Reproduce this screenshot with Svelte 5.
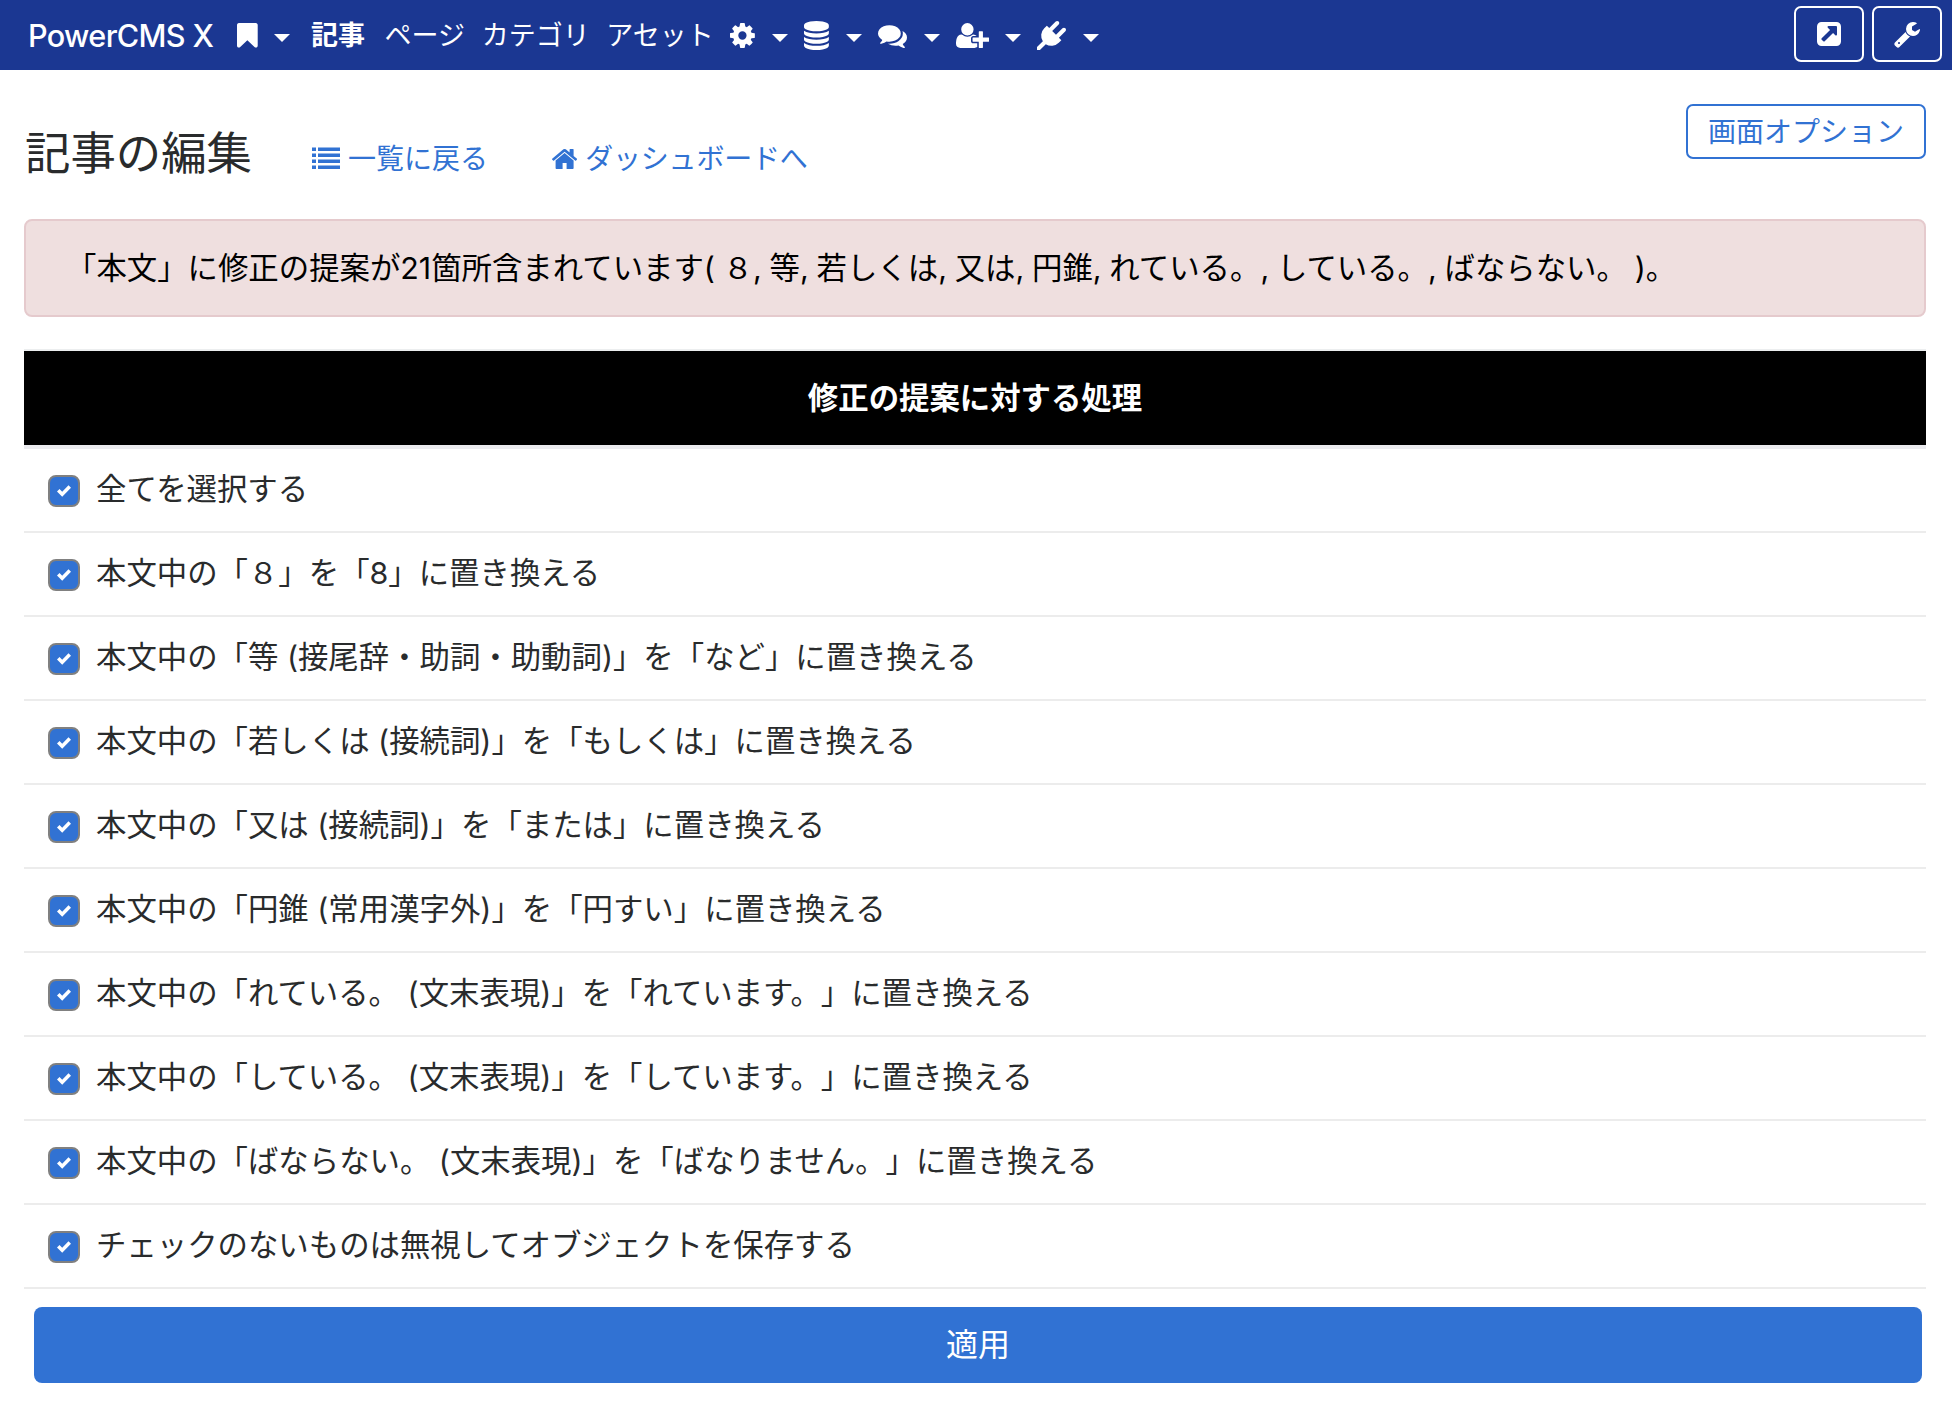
<script>
  const icons = {
    bookmark: { box: '256 0 1280 1792', d: 'M1420 128q23 0 44 9 33 13 52.5 41t19.5 62v1289q0 34-19.5 62t-52.5 41q-19 8-44 8-48 0-83-32l-441-424-441 424q-36 33-83 33-23 0-44-9-33-13-52.5-41t-19.5-62v-1289q0-34 19.5-62t52.5-41q21-9 44-9h1048z' },
    cog: { box: '128 0 1536 1792', d: 'M1152 896q0-106-75-181t-181-75-181 75-75 181 75 181 181 75 181-75 75-181zm512-109v222q0 12-8 23t-20 13l-185 28q-19 54-39 91 35 50 107 138 10 12 10 25t-9 23q-27 37-99 108t-94 71q-12 0-26-9l-138-108q-44 23-91 38-16 136-29 186-7 28-36 28h-222q-14 0-24.500-8.500t-11.500-21.500l-28-184q-49-16-90-37l-141 107q-10 9-25 9-14 0-25-11-126-114-165-168-7-10-7-23 0-12 8-23 15-21 51-66.500t54-70.500q-27-50-41-99l-183-27q-13-2-21-12.500t-8-23.500v-222q0-12 8-23t19-13l186-28q14-46 39-92-40-57-107-138-10-12-10-24 0-10 9-23 26-36 98.500-107.500t94.500-71.500q13 0 26 10l138 107q44-23 91-38 16-136 29-186 7-28 36-28h222q14 0 24.500 8.500t11.500 21.500l28 184q49 16 90 37l142-107q9-9 24-9 13 0 25 10 129 119 165 170 7 8 7 22 0 12-8 23-15 21-51 66.500t-54 70.500q26 50 41 98l183 28q13 2 21 12.500t8 23.500z' },
    database: { box: '128 0 1536 1792', d: 'M896 768q237 0 443-43t325-127v170q0 69-103 128t-280 93.500-385 34.500-385-34.500-280-93.500-103-128v-170q119 84 325 127t443 43zm0 768q237 0 443-43t325-127v170q0 69-103 128t-280 93.500-385 34.500-385-34.500-280-93.500-103-128v-170q119 84 325 127t443 43zm0-384q237 0 443-43t325-127v170q0 69-103 128t-280 93.500-385 34.500-385-34.500-280-93.500-103-128v-170q119 84 325 127t443 43zm0-1152q208 0 385 34.500t280 93.500 103 128v128q0 69-103 128t-280 93.500-385 34.500-385-34.500-280-93.500-103-128v-128q0-69 103-128t280-93.500 385-34.500z' },
    comments: { box: '0 0 1792 1792', d: 'M1408 768q0 139-94 257t-256.500 186.500-353.500 68.500q-86 0-176-16-124 88-278 128-36 9-86 16h-3q-11 0-20.500-8t-11.500-21q-1-3-1-6.500t.5-6.500 2-6l2.500-5 3.500-5.500 4-5 4.500-5 4-4.500q5-6 23-25t26-29.500 22.500-29 25-38.500 20.500-44q-124-72-195-177t-71-224q0-139 94-257t256.500-186.500 353.500-68.500 353.500 68.500 256.500 186.500 94 257zm384 256q0 120-71 224.500t-195 176.500q10 24 20.500 44t25 38.500 22.500 29 26 29.500 23 25q1 1 4 4.500t4.500 5 4 5 3.500 5.500l2.500 5 2 6 .5 6.500-1 6.500q-3 14-13 22t-22 7q-50-7-86-16-154-40-278-128-90 16-176 16-271 0-472-132 58 4 88 4 161 0 309-45t264-129q125-92 192-212t67-254q0-77-23-152 129 71 204 178t75 230z' },
    userPlus: { box: '0 0 2048 1792', d: 'M704 896q-159 0-271.5-112.5t-112.5-271.5 112.500-271.500 271.500-112.500 271.500 112.500 112.500 271.500-112.500 271.500-271.500 112.500zm960 128h352q13 0 22.500 9.500t9.500 22.500v192q0 13-9.500 22.500t-22.500 9.500h-352v352q0 13-9.500 22.500t-22.500 9.500h-192q-13 0-22.500-9.500t-9.500-22.500v-352h-352q-13 0-22.500-9.500t-9.500-22.500v-192q0-13 9.500-22.500t22.500-9.500h352v-352q0-13 9.500-22.500t22.500-9.500h192q13 0 22.500 9.500t9.500 22.500v352zm-736 224q0 52 38 90t90 38h256v238q-68 50-171 50h-874q-121 0-194-69t-73-190q0-53 3.500-103.500t14-109 26.500-108.500 43-97.500 62-81 85.500-53.500 111.500-20q19 0 39 17 79 61 154.500 91.500t164.500 30.500 164.500-30.500 154.500-91.500q20-17 39-17 132 0 217 96h-223q-52 0-90 38t-38 90v192z' },
    plug: { box: '0 0 1792 1792', d: 'M1755 453q37 38 37 90.500t-37 90.500l-401 400 150 150-160 160q-163 163-389.500 186.500t-411.500-100.500l-362 362h-181v-181l362-362q-124-185-100.500-411.500t186.500-389.500l160-160 150 150 400-401q38-37 91-37t90 37 37 90.500-37 90.500l-400 401 234 234 401-400q38-37 91-37t90 37z' },
    external: { box: '128 0 1536 1792', d: 'M1408 928v-480q0-26-19-45t-45-19h-480q-42 0-59 39-17 41 14 70l144 144-534 534q-19 19-19 45t19 45l102 102q19 19 45 19t45-19l534-534 144 144q18 19 45 19 12 0 25-5 39-17 39-59zm256-512v960q0 119-84.500 203.500t-203.500 84.500h-960q-119 0-203.500-84.500t-84.500-203.500v-960q0-119 84.500-203.500t203.500-84.500h960q119 0 203.500 84.500t84.500 203.500z' },
    wrench: { box: '64 0 1664 1792', d: 'M448 1472q0-26-19-45t-45-19-45 19-19 45 19 45 45 19 45-19 19-45zm644-420l-682 682q-37 37-90 37-52 0-91-37l-106-108q-38-36-38-90 0-53 38-91l681-681q39 98 114.500 173.500t173.500 114.500zm634-435q0 39-23 106-47 134-164.500 217.500t-258.500 83.500q-185 0-316.500-131.500t-131.500-316.500 131.500-316.500 316.500-131.500q58 0 121.500 16.500t107.500 46.500q16 11 16 28t-16 28l-293 169v224l193 107q5-3 79-48.500t135.500-81 70.500-35.500q15 0 23.500 10t8.500 25z' },
    list: { box: '0 0 1792 1792', d: 'M0 1312h256v224h-256zM0 928h256v224h-256zM0 544h256v224h-256zM384 1312h1408v224h-1408zM0 160h256v224h-256zM384 928h1408v224h-1408zM384 544h1408v224h-1408zM384 160h1408v224h-1408z' },
    home: { box: '90 0 1612 1792', d: 'M1472 992v480q0 26-19 45t-45 19h-384v-384h-256v384h-384q-26 0-45-19t-19-45v-480q0-1 .5-3t.5-3l575-474 575 474q1 2 1 6zm223-69l-62 74q-8 9-21 11h-3q-13 0-21-7l-692-577-692 577q-12 8-24 7-13-2-21-11l-62-74q-8-10-7-23.500t11-21.500l719-599q32-26 76-26t76 26l244 204v-195q0-14 9-23t23-9h192q14 0 23 9t9 23v408l219 182q10 8 11 21.500t-7 23.500z' }
  };

  const menus = ['cog', 'database', 'comments', 'userPlus', 'plug'];

  let rows = $state([
    '全てを選択する',
    '本文中の「８」を「8」に置き換える',
    '本文中の「等 (接尾辞・助詞・助動詞)」を「など」に置き換える',
    '本文中の「若しくは (接続詞)」を「もしくは」に置き換える',
    '本文中の「又は (接続詞)」を「または」に置き換える',
    '本文中の「円錐 (常用漢字外)」を「円すい」に置き換える',
    '本文中の「れている。 (文末表現)」を「れています。」に置き換える',
    '本文中の「している。 (文末表現)」を「しています。」に置き換える',
    '本文中の「ばならない。 (文末表現)」を「ばなりません。」に置き換える',
    'チェックのないものは無視してオブジェクトを保存する'
  ].map((label) => ({ label, checked: true })));
</script>

{#snippet icon(name)}
  <svg class="icon" viewBox={icons[name].box} aria-hidden="true"><path d={icons[name].d} /></svg>
{/snippet}

<nav class="navbar">
  <span class="brand">PowerCMS X</span>
  <span class="menu bookmark">{@render icon('bookmark')}<i class="caret"></i></span>
  <div class="links">
    <b>記事</b><span>ページ</span><span>カテゴリ</span><span>アセット</span>
  </div>
  {#each menus as name}
    <span class="menu {name}">{@render icon(name)}<i class="caret"></i></span>
  {/each}
  <div class="tools">
    <button aria-label="サイトを表示">{@render icon('external')}</button>
    <button aria-label="ツール">{@render icon('wrench')}</button>
  </div>
</nav>

<main>
  <header>
    <h1>記事の編集</h1>
    <span class="link list">{@render icon('list')}<span>一覧に戻る</span></span>
    <span class="link home">{@render icon('home')}<span>ダッシュボードへ</span></span>
    <button class="options">画面オプション</button>
  </header>

  <div class="alert">「本文」に修正の提案が21箇所含まれています( ８, 等, 若しくは, 又は, 円錐, れている。, している。, ばならない。 )。</div>

  <section>
    <h2>修正の提案に対する処理</h2>
    {#each rows as row}
      <label class="row">
        <input type="checkbox" bind:checked={row.checked} />
        <span class="box">
          {#if row.checked}
            <svg viewBox="0 0 8 8"><path d="M6.564.75l-3.59 3.612-1.538-1.55L0 4.26 2.974 7.25 8 2.193z" /></svg>
          {/if}
        </span>
        <span class="label">{row.label}</span>
      </label>
    {/each}
  </section>
  <button class="apply">適用</button>
</main>

<style>
  :global(body) {
    background: #fff;
    color: #292b2c;
    font-family: Inter, 'Noto Sans CJK JP', sans-serif;
    font-size: 30.4px;
    text-spacing-trim: space-all;
  }
  * { box-sizing: border-box; }
  button { font-family: inherit; padding: 0; text-spacing-trim: inherit; }
  span, b, h1, h2, button, .alert { white-space: nowrap; }
  .icon { display: block; height: 29px; width: auto; flex: none; fill: currentColor; }

  .navbar {
    display: flex;
    align-items: center;
    height: 70px;
    padding: 0 10px 0 27px;
    background: #1b3792;
    color: #fff;
  }
  .brand { width: 210px; padding: 2px 0 0 1px; font-size: 30.6px; font-weight: 500; letter-spacing: -0.65px; line-height: 40px; }
  .menu { display: flex; align-items: center; justify-content: space-between; flex: none; }
  .caret {
    width: 16px;
    margin-top: 5px;
    border: 8px solid transparent;
    border-top-color: #fff;
    border-bottom: 0;
  }
  .bookmark { width: 53px; }
  .links { display: flex; gap: 16.6px; width: 419px; margin-left: 21px; padding-top: 1px; font-size: 27px; line-height: 40px; }
  .links b { margin-right: 3px; }
  .cog { width: 58px; }
  .database { width: 58px; margin-left: 16px; }
  .comments { width: 62px; margin-left: 16px; }
  .userPlus { width: 65px; margin-left: 16px; }
  .plug { width: 62px; margin-left: 16px; }
  .tools { display: flex; gap: 8px; margin: -2px 0 0 auto; }
  .tools button {
    display: flex;
    align-items: center;
    justify-content: center;
    width: 70px;
    height: 56px;
    border: 2px solid #fff;
    border-radius: 7px;
    background: none;
    color: #fff;
  }
  .tools .icon { height: 28px; }

  main { padding: 34px 26px 0 24px; }
  header { display: flex; height: 115px; color: #3172d3; }
  h1 { width: 287px; margin: 18px 0 0 1px; color: #292b2c; font-size: 45.4px; font-weight: 400; line-height: 64px; }
  .link { display: flex; align-items: center; gap: 8px; height: 40px; margin-top: 35px; font-size: 28px; line-height: 40px; }
  .link .icon { height: 28px; }
  .list { width: 240px; }
  .home { letter-spacing: -0.2px; }
  .options {
    width: 240px;
    height: 55px;
    margin-left: auto;
    border: 2px solid #3172d3;
    border-radius: 7px;
    background: #fff;
    color: #3172d3;
    font-size: 28px;
    line-height: 48px;
  }

  .alert {
    height: 98px;
    margin-bottom: 32px;
    padding: 0 40px;
    border: 2px solid #e5cacd;
    border-radius: 8px;
    background: #efdfdf;
    color: #000;
    line-height: 94px;
    word-spacing: -0.75px;
  }

  h2 {
    height: 100px;
    margin: 0;
    border-top: 2px solid #eceeef;
    border-bottom: 4px solid #ebebef;
    background: #000;
    background-clip: padding-box;
    color: #fff;
    font-size: 30.4px;
    font-weight: 700;
    line-height: 94px;
    text-align: center;
  }
  .row {
    display: flex;
    align-items: center;
    gap: 16px;
    height: 84px;
    padding-left: 24px;
    border-bottom: 2px solid #ececec;
    line-height: 40px;
  }
  .row input { display: none; }
  .label { padding-bottom: 2px; }
  .box {
    display: flex;
    align-items: center;
    justify-content: center;
    width: 32px;
    height: 32px;
    margin-top: 2px;
    border: 2px solid #808080;
    border-radius: 8px;
    background: #3172d3;
  }
  .box svg { width: 14px; height: 14px; fill: #fff; }
  .apply {
    display: block;
    width: calc(100% - 14px);
    height: 76px;
    margin: 18px 4px 0 10px;
    padding-bottom: 6px;
    border: 0;
    border-radius: 8px;
    background: #3172d3;
    color: #fff;
    font-size: 32px;
  }
</style>
